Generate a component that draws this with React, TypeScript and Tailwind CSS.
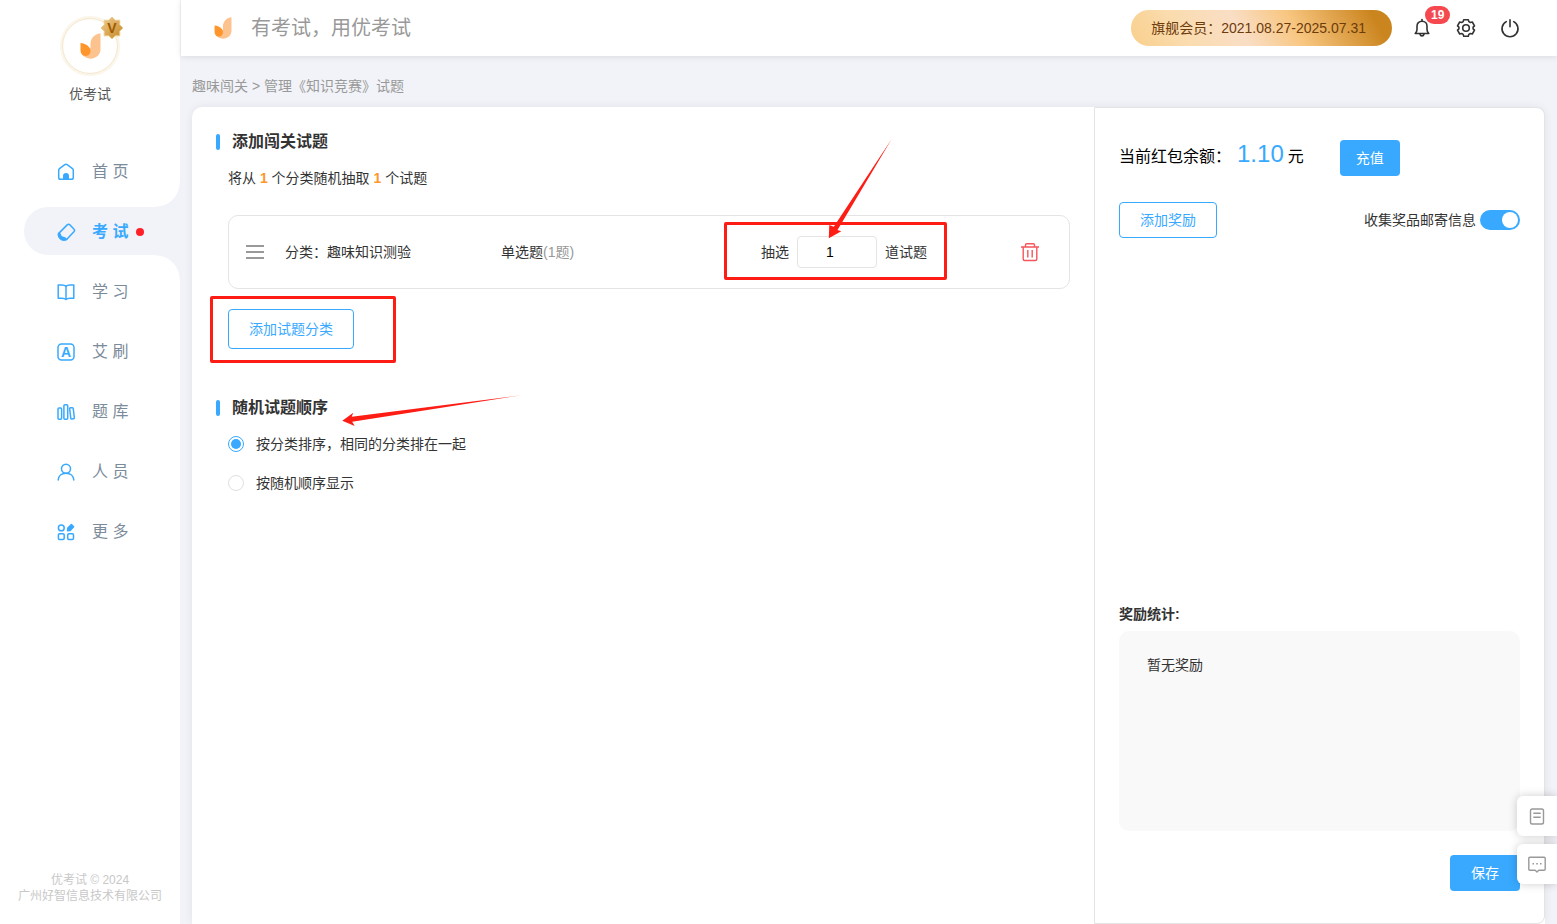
import { useState } from "react";
import type { ReactNode } from "react";

function Logo({ className }: { className: string }) {
  return (
    <svg className={className} viewBox="237 97 62 78" aria-hidden="true">
      <path d="M298 98v48c0 16-13 28-29 28-15 0-27-9-30-22l29-10v-12c0-17 12-30 30-32z" fill="#fdc38f" />
      <path d="M238 127c18 2 30 12 30 25 0 8-6 14-14 14-11 0-16-9-16-18z" fill="#ff962b" />
    </svg>
  );
}

function NavIcon({ children }: { children: ReactNode }) {
  return (
    <svg
      className="size-5 shrink-0 text-[#38a9ff]"
      viewBox="0 0 20 20"
      fill="none"
      stroke="currentColor"
      strokeWidth="1.5"
      strokeLinecap="round"
      strokeLinejoin="round"
      aria-hidden="true"
    >
      {children}
    </svg>
  );
}

const navItems = [
  {
    label: "首 页",
    icon: (
      <>
        <path d="M2.7 8.2c0-.7.3-1.2.8-1.6l5.3-3.9c.7-.5 1.7-.5 2.4 0l5.3 3.9c.5.4.8 1 .8 1.6v7.3c0 1-.8 1.8-1.8 1.8h-11c-1 0-1.8-.8-1.8-1.8z" />
        <path d="M7 17.6V14a3 3 0 0 1 6 0v3.6z" fill="currentColor" stroke="none" />
      </>
    ),
  },
  {
    label: "考 试",
    icon: (
      <>
        <path d="M11.2 2.9c.8-.8 2-.8 2.8 0l3.900 4.100c.8.8.7 2 0 2.800l-6.800 7.300c-1.200 1.200-4.400 1.400-6.500-.5-2-1.800-2.700-4.200-1.600-5.500z" />
        <path d="M3 11.300c1.500.2 1.200 2.300 2.500 3.400 1.200 1.100 3.400.7 4.800 2.500-1.500 1.200-4.200 1-5.800-.5-1.700-1.500-2.500-4.200-1.500-5.400z" fill="currentColor" />
      </>
    ),
  },
  {
    label: "学 习",
    icon: (
      <>
        <path d="M10 4.3C9 3.2 7.5 3 6 3H2.2v13.2H6c1.600 0 3 .2 4 1.300 1-1.100 2.400-1.300 4-1.300h3.800V3H14c-1.500 0-3 .2-4 1.300z" />
        <path d="M10 4.300v13" />
      </>
    ),
  },
  {
    label: "艾 刷",
    icon: (
      <>
        <rect x="2" y="2" width="16" height="16" rx="3.5" />
        <text
          x="10"
          y="15"
          textAnchor="middle"
          fontSize="14"
          fontWeight="700"
          fill="currentColor"
          stroke="none"
        >
          A
        </text>
      </>
    ),
  },
  {
    label: "题 库",
    icon: (
      <>
        <rect x="2" y="6" width="3.6" height="11.2" rx="1" />
        <rect x="7.9" y="2.8" width="3.8" height="14.4" rx="1" />
        <rect x="14.2" y="5.7" width="3.6" height="11.3" rx="1" transform="rotate(-7 16 11.3)" />
      </>
    ),
  },
  {
    label: "人 员",
    icon: (
      <>
        <circle cx="10" cy="6.7" r="4.5" />
        <path d="M2.2 18c.2-4 3.4-6.8 7.8-6.8s7.6 2.8 7.8 6.8" />
      </>
    ),
  },
  {
    label: "更 多",
    icon: (
      <>
        <circle cx="5.3" cy="5.9" r="2.9" />
        <rect x="2.4" y="11.7" width="5.8" height="5.8" rx="1.2" />
        <rect x="11.7" y="11.7" width="5.8" height="5.8" rx="1.2" />
        <path d="M11.6 8.8l.2-2.8 3.6-3.400 2.200 2.200-3.400 3.600z" fill="currentColor" />
      </>
    ),
  },
];

function Sidebar() {
  const active = 1;
  return (
    <aside className="flex w-[180px] shrink-0 flex-col bg-white">
      <div className="flex flex-col items-center pt-4">
        <div className="relative flex size-[60px] items-center justify-center rounded-full border-2 border-[#fbf5ea] ring-1 ring-[#fbf5ea] ring-inset">
          <div className="flex size-[56px] items-center justify-center rounded-full border border-[#f5e8d0]">
            <Logo className="h-[26px] w-[21px]" />
          </div>
          <svg className="absolute -top-0.5 -right-1.5 size-6" viewBox="0 0 24 24" aria-hidden="true">
            <defs>
              <linearGradient id="medal" x1="0" y1="0" x2="1" y2="1">
                <stop offset="0" stopColor="#f0cf94" />
                <stop offset="1" stopColor="#c6841f" />
              </linearGradient>
            </defs>
            <path
              d="M12 1l3.2 3.3 4.6-.1-.1 4.6L23 12l-3.3 3.2.1 4.6-4.6-.1L12 23l-3.2-3.3-4.6.1.1-4.6L1 12l3.3-3.2-.1-4.6 4.6.1z"
              fill="url(#medal)"
              stroke="#e9cb8b"
              strokeWidth="1"
            />
            <text x="12" y="17" textAnchor="middle" fontSize="14" fontWeight="700" fill="#9c5a00">
              V
            </text>
          </svg>
        </div>
        <p className="mt-2 text-sm leading-5 text-[#555]">优考试</p>
      </div>

      <nav className="mt-[43px] flex flex-col gap-3 pl-6 text-base">
        {navItems.map((item, i) => (
          <a
            key={item.label}
            href="#"
            className={
              i === active
                ? "relative flex h-12 items-center gap-4 rounded-l-full bg-[#f1f3f8] pt-0.5 pl-8 font-bold text-[#38a9ff] before:absolute before:right-0 before:bottom-full before:size-6 before:bg-[radial-gradient(circle_at_0_0,transparent_23px,#f1f3f8_24px)] after:absolute after:top-full after:right-0 after:size-6 after:bg-[radial-gradient(circle_at_0_100%,transparent_23px,#f1f3f8_24px)]"
                : "flex h-12 items-center gap-4 pt-0.5 pl-8 text-[#7b8b9a]"
            }
          >
            <NavIcon>{item.icon}</NavIcon>
            <span className="flex items-center gap-2">
              {item.label}
              {i === active && <i className="size-2 rounded-full bg-[#ff1f28]" />}
            </span>
          </a>
        ))}
      </nav>

      <footer className="mt-auto pt-8 pb-5 text-center text-xs text-[#c8c8c8]">
        优考试 © 2024
        <br />
        广州好智信息技术有限公司
      </footer>
    </aside>
  );
}

function Header() {
  return (
    <header className="ml-px flex h-14 items-center bg-white pr-[37px] pl-8 shadow-[0_1px_6px_rgba(0,0,0,0.1)]">
      <Logo className="h-[22px] w-5" />
      <p className="ml-[18px] text-xl text-[#999]">有考试，用优考试</p>
      <p className="ml-auto flex h-9 items-center rounded-full bg-[linear-gradient(60deg,#f9cf8c_0%,#fadcae_20%,#f9dec5_42%,#f8c680_62%,#cb851f_92%)] pr-[26px] pl-5 text-sm text-[#6e3b0b]">
        旗舰会员：2021.08.27-2025.07.31
      </p>
      <div className="ml-5 flex items-center gap-6 text-[#333]">
        <button type="button" aria-label="消息" className="relative">
          <svg className="size-5" viewBox="0 0 20 20" fill="none" stroke="currentColor" strokeWidth="1.6" strokeLinejoin="round" strokeLinecap="round">
            <path d="M10 1.5v1.500" />
            <path d="M3.200 15.500c1.200-1.200 1.800-2.500 1.800-4V8.200c0-2.900 2-5 5-5s5 2.100 5 5v3.300c0 1.500.6 2.800 1.800 4z" />
            <path d="M8 16c.2 1.200 1 1.900 2 1.900s1.800-.7 2-1.900" />
          </svg>
          <span className="absolute -top-3 left-[13px] rounded-full bg-[#f5484f] px-1.5 text-xs leading-[18px] font-bold text-white">
            19
          </span>
        </button>
        <button type="button" aria-label="设置">
          <svg className="size-5" viewBox="0 0 20 20" fill="none" stroke="currentColor" strokeWidth="1.6" strokeLinejoin="round">
            <path d="M7.700 1.700h4.600l.5 1.900 1.600.9 1.900-.5 2.200 3.800-1.400 1.300v1.800l1.400 1.300-2.200 3.800-1.900-.5-1.600.9-.5 1.900H7.700l-.5-1.900-1.600-.9-1.900.5-2.200-3.800 1.400-1.300V9.100L1.500 7.800 3.700 4l1.900.5 1.600-.9z" />
            <circle cx="10" cy="10" r="3.3" />
          </svg>
        </button>
        <button type="button" aria-label="退出">
          <svg className="size-5" viewBox="0 0 20 20" fill="none" stroke="currentColor" strokeWidth="1.6" strokeLinecap="round">
            <path d="M6.300 3.600a8 8 0 1 0 7.400 0M10 1.800v7" />
          </svg>
        </button>
      </div>
    </header>
  );
}

function SectionTitle({ children }: { children: ReactNode }) {
  return (
    <h2 className="flex items-center gap-3 text-base leading-6 font-bold text-[#333]">
      <i className="h-4 w-1 rounded-xs bg-[#38a9ff]" />
      {children}
    </h2>
  );
}

function CategoryRow() {
  const [count, setCount] = useState("1");
  return (
    <div className="flex h-[74px] items-center rounded-[10px] border border-[#e4e4e4] pr-[30px] pl-[17px]">
      <button type="button" aria-label="拖动排序" className="mr-[21px] text-[#999]">
        <svg className="h-4 w-[18px]" viewBox="0 0 18 16" stroke="currentColor" strokeWidth="2">
          <path d="M0 2h18M0 8h18M0 14h18" />
        </svg>
      </button>
      <span className="w-[216px]">分类：趣味知识测验</span>
      <span className="flex-1">
        单选题<span className="text-[#999]">(1题)</span>
      </span>
      <div className="relative flex items-center gap-2">
        <label htmlFor="pick-count">抽选</label>
        <input
          id="pick-count"
          type="text"
          value={count}
          onChange={(e) => setCount(e.target.value)}
          className="h-8 w-20 rounded border border-[#e4e4e4] pr-3.5 text-center text-black"
        />
        <span>道试题</span>
        <div className="pointer-events-none absolute -top-3.5 -left-[37px] h-[58px] w-[223px] rounded-xs border-3 border-[#fd1d14]" />
        <svg className="pointer-events-none absolute bottom-[29px] left-[67px] h-[100px] w-16" viewBox="0 0 64 100" fill="#fd1d14">
          <path d="M.8 99.300L1.300 86l4.500 1.800L63.700 0 9.500 91l3.800 1.300z" />
        </svg>
      </div>
      <button type="button" aria-label="删除" className="ml-[94px] text-[#f5565b]">
        <svg className="h-5 w-[18px]" viewBox="0 0 18 20" fill="none" stroke="currentColor" strokeWidth="1.4">
          <path d="M0 5h18M4.500 4.800V3c0-.8.5-1.300 1.300-1.300h6.400c.8 0 1.300.5 1.300 1.300v1.800" />
          <path d="M2.200 5v12c0 .9.600 1.500 1.500 1.500h10.600c.9 0 1.500-.6 1.500-1.500V5M6.800 8v7.500M11.200 8v7.500" />
        </svg>
      </button>
    </div>
  );
}

const orders = ["按分类排序，相同的分类排在一起", "按随机顺序显示"];

function QuestionSettings() {
  const [order, setOrder] = useState(0);
  return (
    <section className="min-w-0 flex-1 pt-[23px] pr-6 pb-8 pl-6 text-[#333]">
      <SectionTitle>添加闯关试题</SectionTitle>
      <div className="pl-3">
        <p className="mt-3.5">
          将从 <b className="text-[#ff962b]">1</b> 个分类随机抽取 <b className="text-[#ff962b]">1</b> 个试题
        </p>
        <div className="mt-[27px]">
          <CategoryRow />
        </div>
        <div className="relative mt-5 w-fit">
          <button type="button" className="block h-10 rounded border border-[#38a9ff] px-5 text-[#38a9ff]">
            添加试题分类
          </button>
          <div className="pointer-events-none absolute -top-[13px] -left-[18px] h-[67px] w-[186px] rounded-xs border-3 border-[#fd1d14]" />
        </div>
      </div>

      <div className="relative mt-[47px]">
        <SectionTitle>随机试题顺序</SectionTitle>
        <svg className="pointer-events-none absolute -top-px left-[126px] h-8 w-[180px]" viewBox="0 0 180 32" fill="#fd1d14">
          <path d="M.3 25.700l11-8-1.600 4L179.700.200 10.200 26.800l2.500 4.200z" />
        </svg>
      </div>
      <div className="mt-3.5 flex flex-col gap-[19px] pl-3">
        {orders.map((label, i) => (
          <label key={label} className="flex items-center gap-3">
            <input
              type="radio"
              name="order"
              checked={order === i}
              onChange={() => setOrder(i)}
              className="size-4 appearance-none rounded-full border border-[#e0e0e0] checked:border-[#38a9ff] checked:bg-[#38a9ff] checked:bg-clip-content checked:p-0.5"
            />
            {label}
          </label>
        ))}
      </div>
    </section>
  );
}

function RewardPanel() {
  const [collect, setCollect] = useState(true);
  return (
    <section className="flex w-[451px] shrink-0 flex-col rounded-r-lg border border-[#e4e4e4] px-6 py-8 text-[#333]">
      <div className="flex h-9 items-start">
        <p className="text-base leading-7 text-black">
          当前红包余额：
          <span className="mr-1 ml-1.5 text-2xl leading-7 text-[#38a9ff]">1.10</span>元
        </p>
        <button type="button" className="ml-9 h-9 rounded bg-[#38a9ff] px-4 text-white">
          充值
        </button>
      </div>
      <div className="mt-[26px] flex items-center justify-between">
        <button type="button" className="h-9 rounded border border-[#38a9ff] px-5 text-[#38a9ff]">
          添加奖励
        </button>
        <label className="flex items-center gap-1">
          收集奖品邮寄信息
          <input
            type="checkbox"
            role="switch"
            checked={collect}
            onChange={(e) => setCollect(e.target.checked)}
            className="flex h-5 w-10 appearance-none items-center rounded-full bg-[#ccc] px-0.5 before:size-4 before:rounded-full before:bg-white checked:justify-end checked:bg-[#38a9ff]"
          />
        </label>
      </div>

      <h3 className="mt-auto pt-8 font-bold">奖励统计:</h3>
      <div className="mt-[7px] h-[200px] rounded-[10px] bg-[#f9f9f9] px-7 py-6">暂无奖励</div>
      <button type="button" className="mt-6 h-9 w-[70px] self-end rounded bg-[#38a9ff] text-white">
        保存
      </button>
    </section>
  );
}

function FloatTools() {
  return (
    <div className="fixed right-0 bottom-10 flex flex-col gap-2 text-[#999]">
      <button
        type="button"
        aria-label="文档"
        className="flex size-10 items-center justify-center rounded-l-md bg-white shadow-[0_0_10px_rgba(0,0,0,0.2)]"
      >
        <svg className="size-5" viewBox="0 0 20 20" fill="none" stroke="currentColor" strokeWidth="1.4">
          <rect x="3.5" y="3" width="13" height="15" rx="1.8" />
          <path d="M6.300 7.300h7.400M6.300 11.300h7.400" />
        </svg>
      </button>
      <button
        type="button"
        aria-label="反馈"
        className="flex size-10 items-center justify-center rounded-l-md bg-white shadow-[0_0_10px_rgba(0,0,0,0.2)]"
      >
        <svg className="size-5" viewBox="0 0 20 20" fill="none" stroke="currentColor" strokeWidth="1.4" strokeLinejoin="round">
          <path d="M2.800 3.300h14.400c.7 0 1 .4 1 1v11c0 .7-.4 1-1 1h-5.400L10 18l-1.800-1.700H2.800c-.6 0-1-.3-1-1v-11c0-.6.4-1 1-1z" />
          <path d="M5.500 9.800h1.500M9.200 9.800h1.600M13 9.800h1.500" strokeWidth="1.6" />
        </svg>
      </button>
    </div>
  );
}

export default function App() {
  return (
    <div className="flex min-h-screen bg-[#f1f3f8] font-['Liberation_Sans','Noto_Sans_CJK_SC',sans-serif] text-sm leading-5">
      <Sidebar />
      <div className="flex min-w-0 flex-1 flex-col">
        <Header />
        <p className="pt-5 pb-[11px] pl-3 text-[#999]">趣味闯关 &gt; 管理《知识竞赛》试题</p>
        <main className="mx-3 flex flex-1 rounded-t-[10px] bg-white shadow-[0_0_10px_rgba(0,0,0,0.07)]">
          <QuestionSettings />
          <RewardPanel />
        </main>
      </div>
      <FloatTools />
    </div>
  );
}
